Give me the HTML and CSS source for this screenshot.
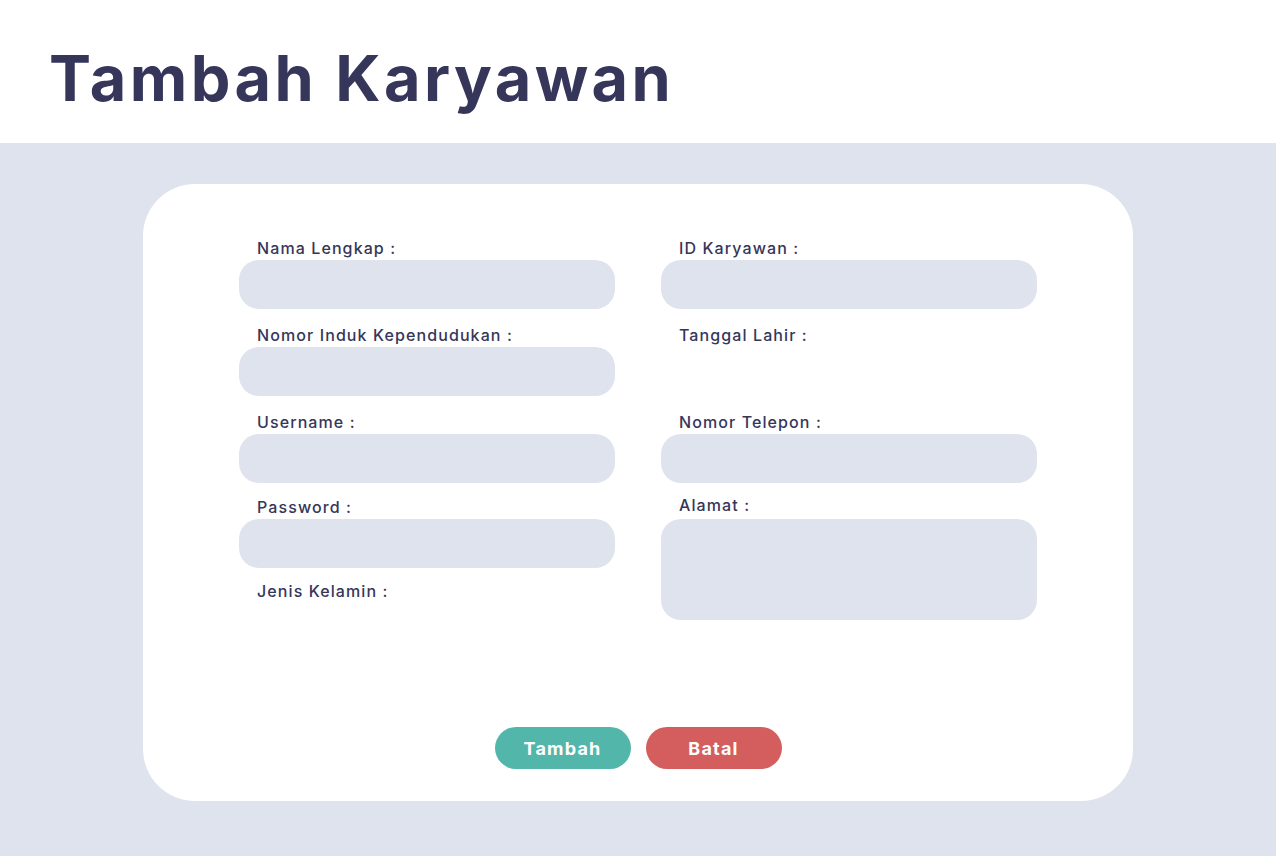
FILE: index.html
```html
<!DOCTYPE html>
<html lang="id">
<head>
<meta charset="utf-8">
<title>Tambah Karyawan</title>
<link rel="stylesheet" href="styles.css">
</head>
<body>
<header class="top">
  <h1 class="title">Tambah Karyawan</h1>
</header>
<main class="main">
  <section class="card">
    <form class="form">
      <div class="field">
        <label class="label">Nama Lengkap :</label>
        <div class="input"></div>
      </div>
      <div class="field">
        <label class="label">ID Karyawan :</label>
        <div class="input"></div>
      </div>
      <div class="field">
        <label class="label">Nomor Induk Kependudukan :</label>
        <div class="input"></div>
      </div>
      <div class="field">
        <label class="label">Tanggal Lahir :</label>
      </div>
      <div class="field">
        <label class="label">Username :</label>
        <div class="input"></div>
      </div>
      <div class="field">
        <label class="label">Nomor Telepon :</label>
        <div class="input"></div>
      </div>
      <div class="field field-pass">
        <label class="label">Password :</label>
        <div class="input"></div>
      </div>
      <div class="field field-tall">
        <label class="label label-up">Alamat :</label>
        <div class="input textarea"></div>
      </div>
      <div class="field field-gender">
        <label class="label">Jenis Kelamin :</label>
      </div>
    </form>
    <div class="actions">
      <button class="btn btn-add" type="button">Tambah</button>
      <button class="btn btn-cancel" type="button">Batal</button>
    </div>
  </section>
</main>
</body>
</html>
```
FILE: styles.css
```css
* { box-sizing: border-box; }
html, body { margin: 0; padding: 0; }
body {
  width: 1276px;
  height: 856px;
  overflow: hidden;
  background: #dfe3ee;
  font-family: "Inter", "Open Sans", sans-serif;
  color: #35365a;
}
.top {
  height: 143px;
  background: #ffffff;
  padding: 38px 0 0 49px;
}
.title {
  margin: 0;
  font-size: 63px;
  line-height: 80px;
  font-weight: 700;
  letter-spacing: 3.4px;
  color: #35365a;
  white-space: nowrap;
}
.main {
  padding: 41px 143px 0 143px;
}
.card {
  width: 990px;
  height: 617px;
  background: #ffffff;
  border-radius: 52px;
  padding: 52px 96px 32px 96px;
  display: flex;
  flex-direction: column;
}
.form {
  display: grid;
  grid-template-columns: 376px 376px;
  grid-template-rows: repeat(4, 73px) 24px;
  column-gap: 46px;
  row-gap: 14px;
  align-items: start;
}
.field {
  display: flex;
  flex-direction: column;
}
.field-pass {
  margin-top: -2px;
}
.field-gender {
  margin-top: -5px;
}
.field-tall {
  grid-row: span 2;
  margin-top: -2px;
}
.label {
  display: block;
  height: 24px;
  line-height: 24px;
  font-size: 16px;
  font-weight: 500;
  letter-spacing: 1.1px;
  padding-left: 18px;
  white-space: nowrap;
}
.label-up {
  margin-top: -2px;
  margin-bottom: 2px;
}
.input {
  height: 49px;
  background: #dfe3ee;
  border-radius: 20px;
}
.textarea {
  height: 101px;
}
.actions {
  margin-top: auto;
  display: flex;
  justify-content: center;
  gap: 15px;
}
.btn {
  width: 136px;
  height: 42px;
  border: none;
  border-radius: 21px;
  color: #ffffff;
  font-family: "Inter", "Open Sans", sans-serif;
  font-size: 18px;
  font-weight: 700;
  letter-spacing: 1.2px;
  cursor: pointer;
}
.btn-add { background: #52b6ab; }
.btn-cancel { background: #d45e5e; }
```
